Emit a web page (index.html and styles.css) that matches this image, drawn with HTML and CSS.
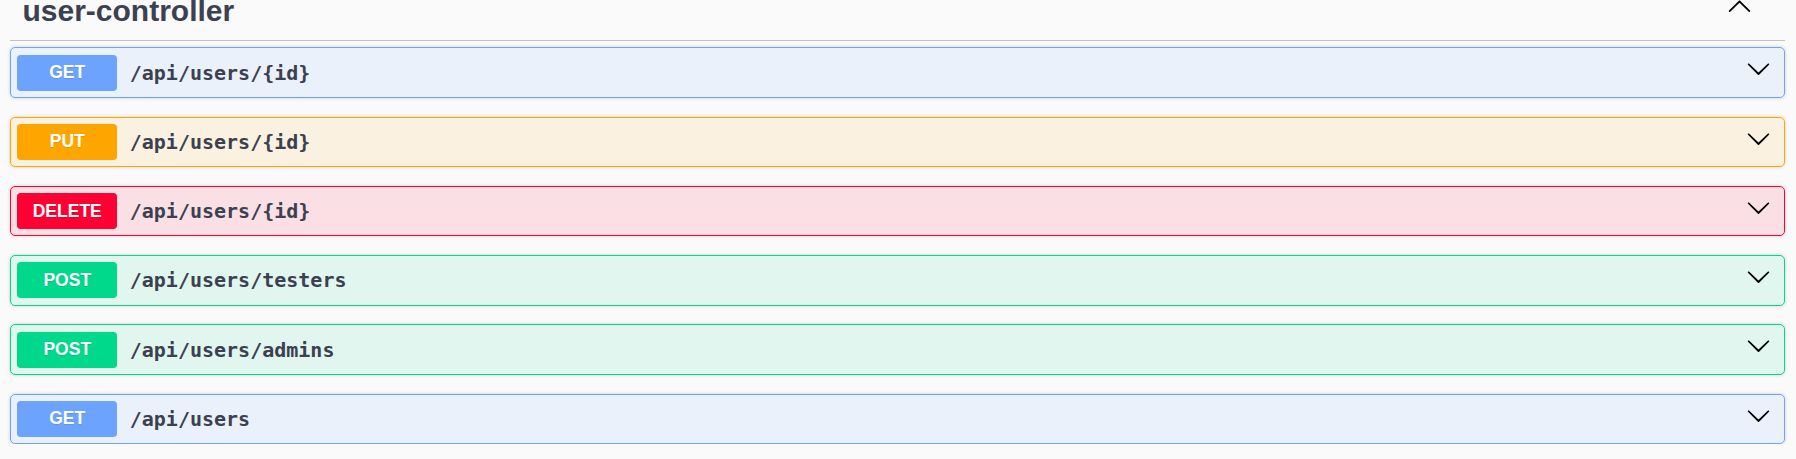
FILE: index.html
```html
<!DOCTYPE html>
<html lang="en">
<head>
<meta charset="utf-8">
<title>user-controller</title>
<link rel="stylesheet" href="styles.css">
</head>
<body>
<div class="wrapper">
  <section class="tag-section">
    <h3 class="tag">
      <span class="tag-name">user-controller</span>
      <button class="tag-toggle" aria-label="Collapse operation">
        <svg class="arrow" width="25" height="25" viewBox="0 0 20 20"><path d="M17.418 14.908c.272.268.709.268.979 0s.271-.701 0-.969l-7.908-7.83c-.27-.268-.707-.268-.979 0l-7.908 7.83c-.27.268-.27.701 0 .969.271.268.709.268.979 0L10 7.767l7.418 7.141z"/></svg>
      </button>
    </h3>
    <div class="ops">
      <div class="op op-get">
        <div class="summary">
          <span class="method">GET</span>
          <span class="path">/api/users/{id}</span>
          <button class="op-toggle" aria-label="Expand"><svg class="arrow" width="25" height="25" viewBox="0 0 20 20"><path d="M17.418 6.109c.272-.268.709-.268.979 0s.271.701 0 .969l-7.908 7.83c-.27.268-.707.268-.979 0l-7.908-7.83c-.27-.268-.27-.701 0-.969.271-.268.709-.268.979 0L10 13.25l7.418-7.141z"/></svg></button>
        </div>
      </div>
      <div class="op op-put">
        <div class="summary">
          <span class="method">PUT</span>
          <span class="path">/api/users/{id}</span>
          <button class="op-toggle" aria-label="Expand"><svg class="arrow" width="25" height="25" viewBox="0 0 20 20"><path d="M17.418 6.109c.272-.268.709-.268.979 0s.271.701 0 .969l-7.908 7.83c-.27.268-.707.268-.979 0l-7.908-7.83c-.27-.268-.27-.701 0-.969.271-.268.709-.268.979 0L10 13.25l7.418-7.141z"/></svg></button>
        </div>
      </div>
      <div class="op op-delete">
        <div class="summary">
          <span class="method">DELETE</span>
          <span class="path">/api/users/{id}</span>
          <button class="op-toggle" aria-label="Expand"><svg class="arrow" width="25" height="25" viewBox="0 0 20 20"><path d="M17.418 6.109c.272-.268.709-.268.979 0s.271.701 0 .969l-7.908 7.83c-.27.268-.707.268-.979 0l-7.908-7.83c-.27-.268-.27-.701 0-.969.271-.268.709-.268.979 0L10 13.25l7.418-7.141z"/></svg></button>
        </div>
      </div>
      <div class="op op-post">
        <div class="summary">
          <span class="method">POST</span>
          <span class="path">/api/users/testers</span>
          <button class="op-toggle" aria-label="Expand"><svg class="arrow" width="25" height="25" viewBox="0 0 20 20"><path d="M17.418 6.109c.272-.268.709-.268.979 0s.271.701 0 .969l-7.908 7.83c-.27.268-.707.268-.979 0l-7.908-7.83c-.27-.268-.27-.701 0-.969.271-.268.709-.268.979 0L10 13.25l7.418-7.141z"/></svg></button>
        </div>
      </div>
      <div class="op op-post">
        <div class="summary">
          <span class="method">POST</span>
          <span class="path">/api/users/admins</span>
          <button class="op-toggle" aria-label="Expand"><svg class="arrow" width="25" height="25" viewBox="0 0 20 20"><path d="M17.418 6.109c.272-.268.709-.268.979 0s.271.701 0 .969l-7.908 7.83c-.27.268-.707.268-.979 0l-7.908-7.83c-.27-.268-.27-.701 0-.969.271-.268.709-.268.979 0L10 13.25l7.418-7.141z"/></svg></button>
        </div>
      </div>
      <div class="op op-get">
        <div class="summary">
          <span class="method">GET</span>
          <span class="path">/api/users</span>
          <button class="op-toggle" aria-label="Expand"><svg class="arrow" width="25" height="25" viewBox="0 0 20 20"><path d="M17.418 6.109c.272-.268.709-.268.979 0s.271.701 0 .969l-7.908 7.83c-.27.268-.707.268-.979 0l-7.908-7.83c-.27-.268-.27-.701 0-.969.271-.268.709-.268.979 0L10 13.25l7.418-7.141z"/></svg></button>
        </div>
      </div>
    </div>
  </section>
</div>
</body>
</html>
```

FILE: styles.css
```css
html, body {
  margin: 0;
  padding: 0;
  background: #fafafa;
  font-family: "Liberation Sans", Arial, sans-serif;
  color: #3b4151;
  overflow: hidden;
}

.wrapper {
  padding: 0 11px 0 10px;
}

/* page is shown scrolled a little: header partly above the viewport */
.tag-section {
  margin-top: -19px;
}

.tag {
  display: flex;
  align-items: center;
  margin: 0 0 6.25px;
  padding: 12.5px 0 12.5px 12.5px;
  border-bottom: 1px solid rgba(59, 65, 81, 0.3);
  font-size: 30px;
  font-weight: 700;
  line-height: normal;
  color: #3b4151;
}

.tag-toggle {
  margin-left: auto;
  margin-right: 33px;
  align-self: flex-start;
  margin-top: -0.6px;
  padding: 0;
  border: 0;
  background: none;
  display: flex;
  cursor: pointer;
}

.arrow {
  display: block;
  fill: #000;
}

.ops {
  display: flex;
  flex-direction: column;
  gap: 18.75px;
}

.op {
  border: 1px solid;
  border-radius: 5px;
  box-shadow: 0 0 3.75px rgba(0, 0, 0, 0.19);
}

.summary {
  display: flex;
  align-items: center;
  padding: 6.25px;
}

.method {
  min-width: 100px;
  padding: 7.5px 0;
  line-height: 21px;
  font-size: 17.5px;
  font-weight: 700;
  text-align: center;
  color: #fff;
  border-radius: 3.75px;
  text-shadow: 0 1.25px 0 rgba(0, 0, 0, 0.1);
}

.path {
  padding: 0 12.5px;
  font-family: "DejaVu Sans Mono", monospace;
  font-size: 20px;
  font-weight: 700;
  color: #3b4151;
}

.op-toggle {
  margin-left: auto;
  margin-right: 7.25px;
  align-self: flex-start;
  margin-top: 1.75px;
  padding: 0;
  border: 0;
  background: none;
  display: flex;
  cursor: pointer;
}

.op-get { background: rgba(107, 163, 255, 0.1); border-color: #6ba3ff; }
.op-get .method { background: #6ba3ff; }

.op-put { background: rgba(255, 165, 0, 0.1); border-color: #ffa500; }
.op-put .method { background: #ffa500; }

.op-delete { background: rgba(255, 0, 51, 0.1); border-color: #ff0033; }
.op-delete .method { background: #ff0033; }

.op-post { background: rgba(0, 216, 139, 0.1); border-color: #00d88b; }
.op-post .method { background: #00d88b; }
```
